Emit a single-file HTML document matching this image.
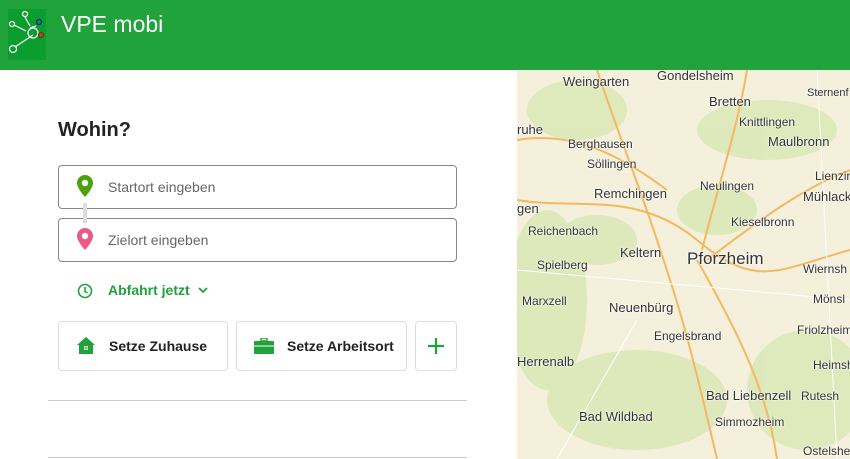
<!DOCTYPE html>
<html><head><meta charset="utf-8"><style>
*{margin:0;padding:0;box-sizing:border-box}
body{width:850px;height:459px;overflow:hidden;font-family:"Liberation Sans",sans-serif;background:#fff;position:relative}
.hdr{position:absolute;left:0;top:0;width:850px;height:70px;background:#1fa33a}
.logo{position:absolute;left:8px;top:9px;width:38px;height:51px;background:#0b9d2e}
.title{position:absolute;left:61px;top:11px;color:#fff;font-size:23px}
.map{position:absolute;left:517px;top:70px;width:333px;height:389px;background:#f5f0dc;overflow:hidden}
.map span{position:absolute;font-size:13px;color:#333;white-space:nowrap;text-shadow:0 0 2px #fff,0 0 2px #fff}
h2{position:absolute;left:58px;top:119px;font-size:20px;color:#222;font-weight:bold}
.inp{position:absolute;left:58px;width:399px;height:44px;border:1px solid #888;border-radius:4px;font-size:14px;color:#666;padding-left:49px;line-height:42px}
.btn{position:absolute;top:321px;height:50px;border:1px solid #ddd;border-radius:4px;font-size:14px;font-weight:bold;color:#222;line-height:48px}
.line{position:absolute;left:48px;width:419px;height:1px;background:#ccc}
</style></head><body>
<div class="hdr"></div>
<div class="logo"><svg width="38" height="51" viewBox="0 0 38 51"><g fill="none" stroke="#fff" stroke-width="1.2"><circle cx="17" cy="5" r="2.5"/><circle cx="4" cy="15" r="2.5"/><circle cx="5" cy="40" r="3.5"/><path d="M17 8L22 17M6 16L18 22M7 38L25 26M22 19L28 17"/><circle cx="25" cy="24" r="5"/></g><circle cx="31" cy="13" r="2.5" fill="none" stroke="#0018a0" stroke-width="1.2"/><circle cx="33" cy="26" r="2.5" fill="none" stroke="#d00" stroke-width="1.2"/></svg></div>
<div class="title">VPE mobi</div>

<h2>Wohin?</h2>
<div class="inp" style="top:165px">Startort eingeben</div>
<div class="inp" style="top:218px">Zielort eingeben</div>
<div style="position:absolute;left:83px;top:203px;width:4px;height:20px;background:#ddd"></div>
<svg style="position:absolute;left:77px;top:175px" width="16" height="22" viewBox="0 0 16 22"><path d="M8 0C3.6 0 0 3.5 0 8c0 5.5 8 14 8 14s8-8.5 8-14C16 3.5 12.4 0 8 0z" fill="#4aa30d"/><circle cx="8" cy="8" r="3.2" fill="#fff"/></svg>
<svg style="position:absolute;left:77px;top:228px" width="16" height="22" viewBox="0 0 16 22"><path d="M8 0C3.6 0 0 3.5 0 8c0 5.5 8 14 8 14s8-8.5 8-14C16 3.5 12.4 0 8 0z" fill="#e95a87"/><circle cx="8" cy="8" r="3.2" fill="#fff"/></svg>
<svg style="position:absolute;left:77px;top:283px" width="16" height="16" viewBox="0 0 16 16"><circle cx="8" cy="8" r="6.5" fill="none" stroke="#1fa33a" stroke-width="1.6"/><path d="M8 4v4.5l2.5 1.5" fill="none" stroke="#1fa33a" stroke-width="1.6"/></svg>
<div style="position:absolute;left:108px;top:282px;font-size:14px;font-weight:bold;color:#1fa33a">Abfahrt jetzt</div>
<svg style="position:absolute;left:197px;top:285px" width="12" height="10"><path d="M2 3l4 4 4-4" fill="none" stroke="#1fa33a" stroke-width="1.8"/></svg>

<div class="btn" style="left:58px;width:170px;padding-left:50px">Setze Zuhause</div>
<svg style="position:absolute;left:77px;top:337px" width="18" height="17" viewBox="0 0 18 17"><path d="M9 0L0 8h2v9h14V8h2z" fill="#1fa33a"/><rect x="7" y="9" width="4" height="4" fill="#fff"/><path d="M9 9v4M7 11h4" stroke="#1fa33a" stroke-width=".8"/></svg>
<div class="btn" style="left:236px;width:171px;padding-left:50px">Setze Arbeitsort</div>
<svg style="position:absolute;left:254px;top:338px" width="20" height="16" viewBox="0 0 20 16"><rect x="7" y="0" width="6" height="3" fill="none" stroke="#1fa33a" stroke-width="1.5"/><rect x="0" y="3" width="20" height="13" rx="1" fill="#1fa33a"/><path d="M0 8h20" stroke="#fff" stroke-width="1"/></svg>
<div class="btn" style="left:415px;width:42px"></div>
<svg style="position:absolute;left:427px;top:337px" width="18" height="18"><path d="M9 1v16M1 9h16" stroke="#1fa33a" stroke-width="2.2"/></svg>

<div class="line" style="top:400px"></div>
<div class="line" style="top:457px"></div>

<div class="map">
<svg width="333" height="389" style="position:absolute;left:0;top:0">
<g fill="#dbe8b8" opacity=".9"><ellipse cx="60" cy="40" rx="50" ry="30"/><ellipse cx="250" cy="60" rx="70" ry="30"/><ellipse cx="30" cy="230" rx="40" ry="90"/><ellipse cx="120" cy="330" rx="90" ry="50"/><ellipse cx="290" cy="320" rx="60" ry="60"/><ellipse cx="200" cy="140" rx="40" ry="25"/><ellipse cx="80" cy="170" rx="40" ry="25"/></g>
<g fill="none" stroke="#f4b860" stroke-width="2"><path d="M0 130C60 140 120 120 180 170S260 200 333 180"/><path d="M80 0C100 60 120 110 140 170S170 260 200 389"/><path d="M190 190C230 160 280 120 333 100"/><path d="M0 70C60 60 110 90 150 120"/><path d="M180 190C220 260 250 320 260 389"/><path d="M230 0C220 60 200 120 185 180"/></g>
<g fill="none" stroke="#fff" stroke-width="1"><path d="M0 200L333 230M40 389L120 250M300 0L320 389"/></g>
</svg>
<span style="left:46px;top:4px">Weingarten</span><span style="left:140px;top:-2px">Gondelsheim</span>
<span style="left:0;top:52px">ruhe</span><span style="left:192px;top:24px">Bretten</span><span style="left:290px;top:17px;font-size:11px">Sternenf</span>
<span style="left:51px;top:67px;font-size:12px">Berghausen</span><span style="left:222px;top:45px;font-size:12px">Knittlingen</span>
<span style="left:70px;top:87px;font-size:12px">Söllingen</span><span style="left:251px;top:64px">Maulbronn</span>
<span style="left:77px;top:116px">Remchingen</span><span style="left:183px;top:109px;font-size:12px">Neulingen</span><span style="left:298px;top:99px;font-size:12px">Lienzir</span><span style="left:286px;top:119px">Mühlack</span>
<span style="left:0;top:131px">gen</span><span style="left:214px;top:145px;font-size:12px">Kieselbronn</span>
<span style="left:11px;top:154px;font-size:12px">Reichenbach</span><span style="left:103px;top:175px">Keltern</span><span style="left:170px;top:179px;font-size:17px">Pforzheim</span>
<span style="left:20px;top:188px;font-size:12px">Spielberg</span><span style="left:286px;top:192px;font-size:12px">Wiernsh</span>
<span style="left:5px;top:224px;font-size:12px">Marxzell</span><span style="left:92px;top:230px">Neuenbürg</span><span style="left:296px;top:222px;font-size:12px">Mönsl</span>
<span style="left:137px;top:259px;font-size:12px">Engelsbrand</span><span style="left:280px;top:253px;font-size:12px">Friolzheim</span>
<span style="left:0;top:284px">Herrenalb</span><span style="left:296px;top:288px;font-size:12px">Heimsh</span>
<span style="left:189px;top:318px">Bad Liebenzell</span><span style="left:62px;top:339px">Bad Wildbad</span><span style="left:284px;top:319px;font-size:12px">Rutesh</span>
<span style="left:198px;top:345px;font-size:12px">Simmozheim</span><span style="left:286px;top:374px;font-size:12px">Ostelshe</span>
</div>
</body></html>
